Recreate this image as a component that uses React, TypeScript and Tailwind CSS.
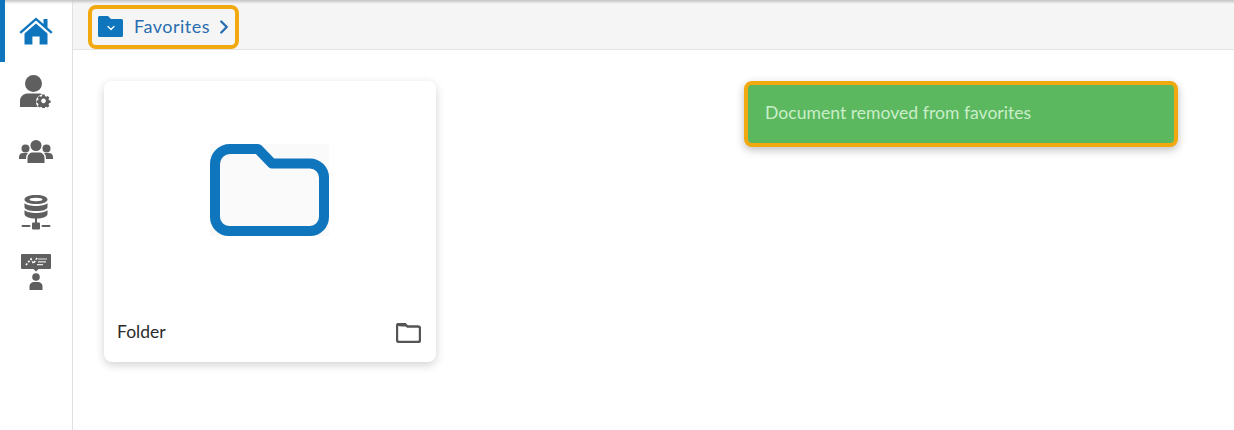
import { ChevronDown, ChevronRight } from "lucide-react";

const font = "font-['Lato','Noto_Sans',sans-serif]";

function HomeIcon() {
  return (
    <svg width="34" height="28" viewBox="0 0 34 28" fill="#0f75bc">
      <path d="M17 0.5 L24.5 7 V2 H28.5 V10.4 L33.6 15 L32 16.8 L17 3.6 L2 16.8 L0.4 15 Z" />
      <path d="M17 6.4 L28.5 16.4 V27.5 H20.6 V19.5 H13.4 V27.5 H5.5 V16.4 Z" />
    </svg>
  );
}

function UserGearIcon() {
  return (
    <svg width="32" height="33" viewBox="0 0 32 33" fill="#5f5f5f">
      <circle cx="13.5" cy="8.5" r="8.5" />
      <path d="M0 32 V26 C0 21 4 18.5 8 18.5 H19 C20.5 18.5 21.5 18.8 22.5 19.3 C18 20.5 16 23.5 16 26.5 C16 28.5 16.6 30.5 18 32 Z" />
      <path
        fillRule="evenodd"
        d="M23.5 20.5 h3 l.5 2 1.6 .7 1.8 -1 2 2 -1 1.8 .7 1.6 2 .5 v3 l-2 .5 -.7 1.6 1 1.8 -2 2 -1.8 -1 -1.6 .7 -.5 2 h-3 l-.5 -2 -1.6 -.7 -1.8 1 -2 -2 1 -1.8 -.7 -1.6 -2 -.5 v-3 l2 -.5 .7 -1.6 -1 -1.8 2 -2 1.8 1 1.6 -.7 Z M25 25.5 a3 3 0 1 0 .01 0 Z"
        transform="translate(4 3.6) scale(.78)"
      />
    </svg>
  );
}

function GroupIcon() {
  return (
    <svg width="34" height="23" viewBox="0 0 34 23" fill="#5f5f5f">
      <circle cx="17" cy="5.5" r="5.5" />
      <circle cx="6.5" cy="8.5" r="4" />
      <circle cx="27.5" cy="8.5" r="4" />
      <path d="M0 19 V17 C0 14.5 2 13 4 13 H9 C7.5 14.5 7 16 7 19 Z" />
      <path d="M34 19 V17 C34 14.5 32 13 30 13 H25 C26.5 14.5 27 16 27 19 Z" />
      <path d="M8.5 23 V18 C8.5 14.5 11 12.5 14 12.5 H20 C23 12.5 25.5 14.5 25.5 18 V23 Z" />
    </svg>
  );
}

function DatabaseIcon() {
  return (
    <svg width="30" height="35" viewBox="0 0 30 35" fill="#5f5f5f">
      <path
        fillRule="evenodd"
        d="M15 0 C22 0 26.5 2 26.5 4.5 C26.5 7 22 9 15 9 C8 9 3.5 7 3.5 4.5 C3.5 2 8 0 15 0 Z M15 2.8 C11 2.8 8.5 3.6 8.5 4.5 C8.5 5.4 11 6.2 15 6.2 C19 6.2 21.5 5.4 21.5 4.5 C21.5 3.6 19 2.8 15 2.8 Z"
      />
      <path d="M3.5 8 C5 10 10 11 15 11 C20 11 25 10 26.5 8 V12 C26.5 14.5 22 16 15 16 C8 16 3.5 14.5 3.5 12 Z" />
      <path d="M3.5 15 C5 17 10 18 15 18 C20 18 25 17 26.5 15 V19 C26.5 21.5 22 23.5 15 23.5 C8 23.5 3.5 21.5 3.5 19 Z" />
      <rect x="14" y="23" width="2" height="6" />
      <rect x="11" y="27.5" width="8" height="7" rx="1" />
      <rect x="0.5" y="30" width="9" height="2" rx="1" />
      <rect x="20.5" y="30" width="9" height="2" rx="1" />
    </svg>
  );
}

function PresenterIcon() {
  return (
    <svg width="30" height="36" viewBox="0 0 30 36" fill="#5f5f5f">
      <path d="M1 0 H29 A1 1 0 0 1 30 1 V14 A1 1 0 0 1 29 15 H17.5 L15 17.5 L12.5 15 H1 A1 1 0 0 1 0 14 V1 A1 1 0 0 1 1 0 Z" />
      <path d="M5 11 L10 5 L12.5 9.5 L16 4" stroke="#fff" strokeWidth="1.6" strokeDasharray="2 1.5" fill="none" />
      <path d="M17 5 H26 M17 7.8 H25 M16 10.6 H22" stroke="#e8e8e8" strokeWidth="1.2" fill="none" />
      <circle cx="15" cy="23" r="3.8" />
      <path d="M8.5 36 V32.5 C8.5 29.5 10.5 28 13 28 H17 C19.5 28 21.5 29.5 21.5 32.5 V36 Z" />
    </svg>
  );
}

function Sidebar() {
  return (
    <aside className="w-[73px] shrink-0 border-r border-[#e0e0e0] bg-white flex flex-col">
      <div className="h-[62px] border-l-[5px] border-[#0f75bc] flex items-center justify-center pr-[5px]">
        <HomeIcon />
      </div>
      <div className="flex flex-col items-center">
        <div className="h-[58px] flex items-center justify-center">
          <UserGearIcon />
        </div>
        <div className="h-[58px] flex items-center justify-center pt-[5px]">
          <GroupIcon />
        </div>
        <div className="h-[60px] flex items-center justify-center mt-[4px]">
          <DatabaseIcon />
        </div>
        <div className="h-[40px] flex items-center justify-center mt-[10px]">
          <PresenterIcon />
        </div>
      </div>
    </aside>
  );
}

function Breadcrumb() {
  return (
    <div className="h-[50px] bg-[#f5f5f5] border-b border-[#e4e4e4] flex items-center pl-[15px] pt-[4px]">
      <div className="w-[151px] h-[44px] border-[4px] border-[#f2a80f] rounded-[8px] flex items-center pl-[6px] pb-[1px] text-[#2a6db0]">
        <svg width="25" height="21" viewBox="0 0 25 21" className="shrink-0">
          <path
            d="M1.5 0 H10 L13 3 H23.5 A1.5 1.5 0 0 1 25 4.5 V19.5 A1.5 1.5 0 0 1 23.5 21 H1.5 A1.5 1.5 0 0 1 0 19.5 V1.5 A1.5 1.5 0 0 1 1.5 0 Z"
            fill="#0f75bc"
          />
        </svg>
        <ChevronDown size={12} strokeWidth={2.5} color="#fff" className="-ml-[18.5px] mt-[3px] mr-[6.5px]" />
        <span className="ml-[11px] text-[18px] tracking-[0.5px] leading-none">Favorites</span>
        <ChevronRight size={22} strokeWidth={2.6} className="ml-[3px] mt-[2px] text-[#2a6db0]" />
      </div>
    </div>
  );
}

function FolderCard() {
  return (
    <div className="w-[332px] h-[281px] bg-white rounded-[8px] shadow-[0_3px_10px_rgba(0,0,0,0.18)] flex flex-col">
      <div className="h-[218px] flex items-center justify-center pb-[2px]">
        <svg width="119" height="92" viewBox="0 0 119 92" className="mt-[2px] -ml-[2px]">
          <rect width="119" height="92" fill="#fafafa" />
          <path
            d="M20 5 H48 L62 19.5 H100 A14 14 0 0 1 114 33.5 V73 A14 14 0 0 1 100 87 H19 A14 14 0 0 1 5 73 V20 A15 15 0 0 1 20 5 Z"
            fill="#fafafa"
            stroke="#0f75bc"
            strokeWidth="10"
            strokeLinejoin="round"
          />
        </svg>
      </div>
      <div className="flex-1 flex items-center justify-between pl-[13px] pr-[15px] mt-[2px]">
        <span className="text-[17.5px] text-[#2b2b2b] pt-[2px]">Folder</span>
        <svg width="25" height="20" viewBox="0 0 25 20" fill="none" className="mt-[2px]">
          <path
            d="M1 3 A2 2 0 0 1 3 1 H9 L11.5 3.5 H22 A2 2 0 0 1 24 5.5 V17 A2 2 0 0 1 22 19 H3 A2 2 0 0 1 1 17 Z"
            stroke="#555"
            strokeWidth="2.4"
          />
          <path d="M1 3 A2 2 0 0 1 3 0.5 H9 L11.5 3.5 H6 Z" fill="#555" />
        </svg>
      </div>
    </div>
  );
}

export default function App() {
  return (
    <div className={`relative w-[1234px] h-[430px] overflow-hidden bg-white flex ${font}`}>
      <Sidebar />
      <main className="flex-1 flex flex-col">
        <Breadcrumb />
        <div className="pl-[31px] pt-[31px]">
          <FolderCard />
        </div>
      </main>
      <div className="absolute left-[5px] right-0 top-0 h-[4px] bg-gradient-to-b from-[#c4c4c4] to-transparent" />
      <div className="absolute left-[744px] top-[81px] w-[434px] h-[66px] bg-[#5cb85f] border-[4px] border-[#f2a80f] rounded-[8px] shadow-[0_3px_8px_rgba(0,0,0,0.25)] flex items-center pl-[17px] pb-[1px] text-[17.6px] text-[#c9eec9]">
        Document removed from favorites
      </div>
    </div>
  );
}
